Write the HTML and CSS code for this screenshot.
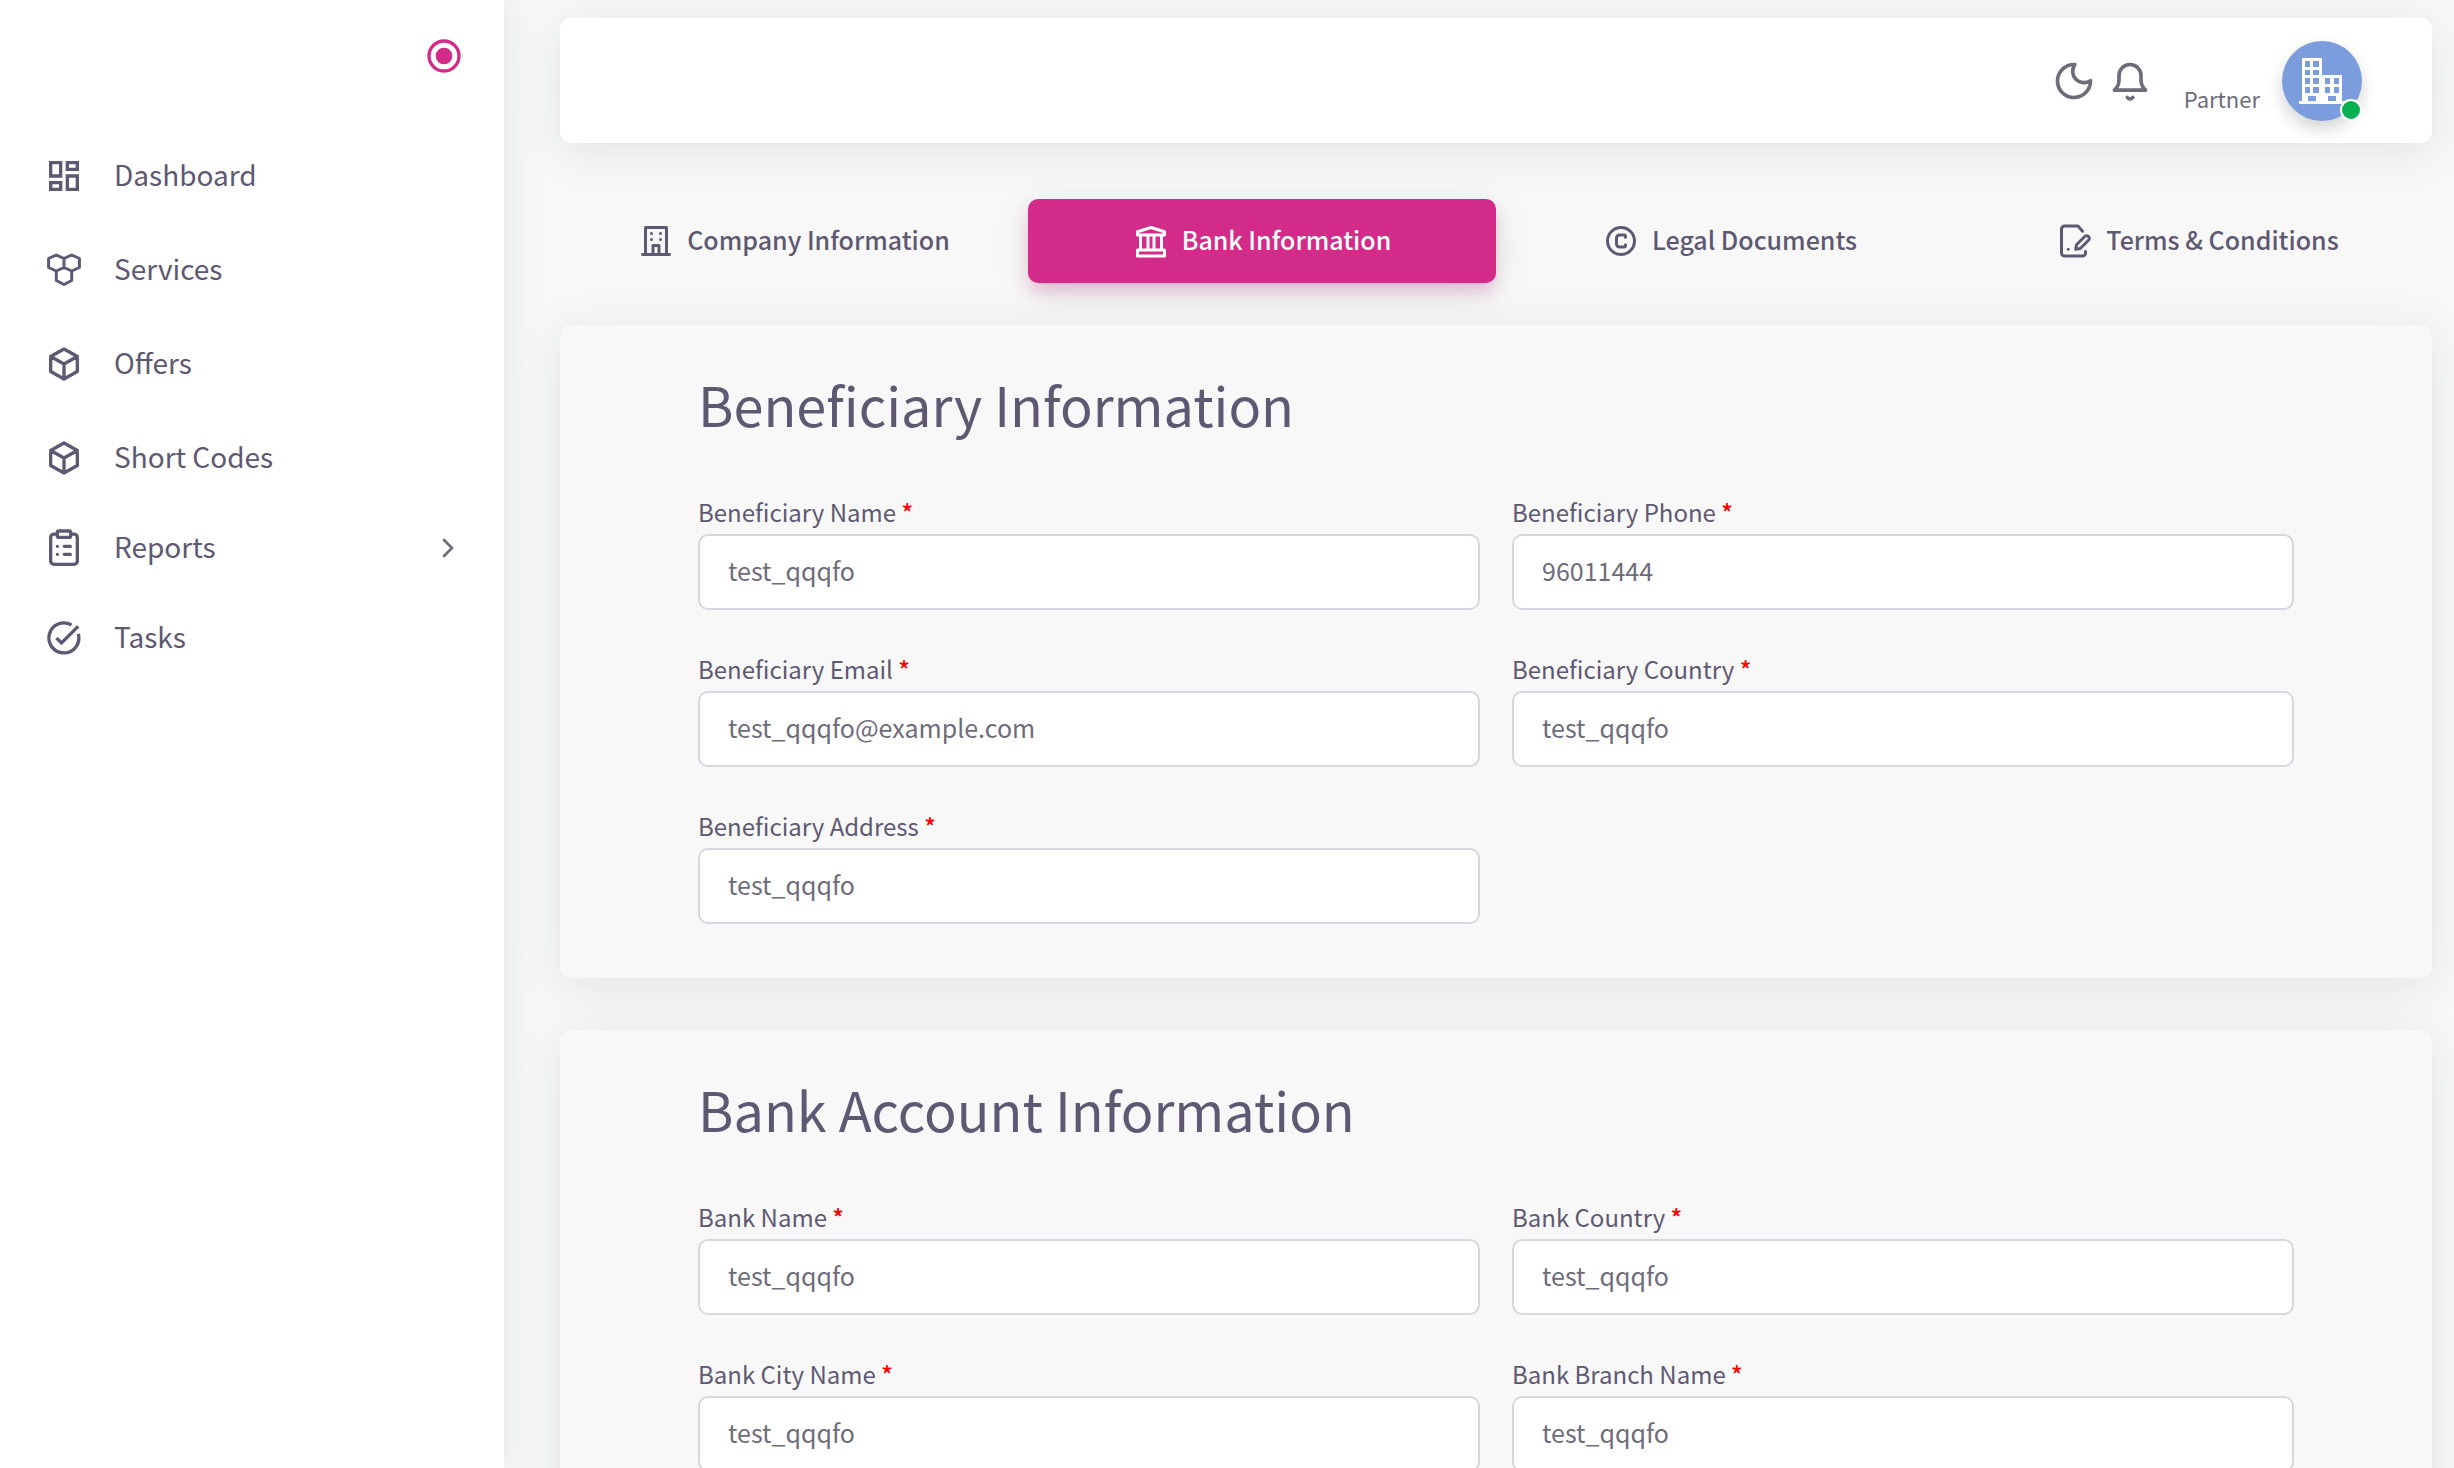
FILE: index.html
```html
<!DOCTYPE html>
<html lang="en">
<head>
  <meta charset="UTF-8">
  <meta name="viewport" content="width=device-width, initial-scale=1.0">
  <title>Bank Information</title>
  <link rel="stylesheet" href="styles.css">
</head>
<body>
  <div class="layout">
    <aside class="sidebar">
      <div class="sidebar-header">
        <button class="icon-button pin" type="button" aria-label="Pin menu">
          <svg viewBox="0 0 24 24" class="icon-lg"><circle cx="12" cy="12" r="9"/><circle cx="12" cy="12" r="5" class="fill"/></svg>
        </button>
      </div>

      <nav class="menu">
        <div class="menu-group menu-main">
          <a class="menu-link" href="#">
            <svg viewBox="0 0 24 24" class="icon-lg square"><path d="M4 4h6v8H4zM14 4h6v4h-6zM4 16h6v4H4zM14 12h6v8h-6z"/></svg>
            <span>Dashboard</span>
          </a>
          <a class="menu-link" href="#">
            <svg viewBox="0 0 40 40" class="icon-lg heavy"><path d="M12.300 5L20 8.500v9L12.300 21l-7.700-3.500v-9zM27.700 5l7.700 3.500v9L27.700 21 20 17.500v-9zM12.300 21v9.500l7.700 4 7.700-4V21"/></svg>
            <span>Services</span>
          </a>
          <a class="menu-link" href="#">
            <svg viewBox="0 0 24 24" class="icon-lg"><path d="M12 3l8 4.500v9L12 21l-8-4.500v-9zM12 12l8-4.500M12 12v9M12 12L4 7.500"/></svg>
            <span>Offers</span>
          </a>
          <a class="menu-link" href="#">
            <svg viewBox="0 0 24 24" class="icon-lg"><path d="M12 3l8 4.500v9L12 21l-8-4.500v-9zM12 12l8-4.500M12 12v9M12 12L4 7.500"/></svg>
            <span>Short Codes</span>
          </a>
        </div>
        <div class="menu-group">
          <a class="menu-link" href="#">
            <svg viewBox="0 0 24 24" class="icon-lg"><path d="M8 3.700H6a2 2 0 0 0-2 2v14.100a2 2 0 0 0 2 2h12a2 2 0 0 0 2-2V5.700a2 2 0 0 0-2-2h-2M9 1.800h6a1 1 0 0 1 1 1v1.800a1 1 0 0 1-1 1H9a1 1 0 0 1-1-1V2.800a1 1 0 0 1 1-1M8 11h.01M12.200 11h3.600M8 15.800h.01M12.200 15.800h3.600"/></svg>
            <span>Reports</span>
            <svg viewBox="0 0 24 24" class="icon-sm chevron"><path d="M9 6l6 6-6 6"/></svg>
          </a>
          <a class="menu-link" href="#">
            <svg viewBox="0 0 24 24" class="icon-lg square"><path d="M7.500 12l3 3L20.500 5M16.500 4.200A9 9 0 1 0 20.600 9.500"/></svg>
            <span>Tasks</span>
          </a>
        </div>
      </nav>
    </aside>

    <div class="content">
      <header class="navbar">
        <button class="icon-button" type="button" aria-label="Dark mode">
          <svg viewBox="0 0 24 24" class="icon-xl"><path d="M12.500 3A6.200 6.200 0 0 0 21 11.800A9 9 0 1 1 12.500 3z"/></svg>
        </button>
        <button class="icon-button" type="button" aria-label="Notifications">
          <svg viewBox="0 0 24 24" class="icon-xl"><path d="M3.500 17c1.800-1.500 2.500-3 2.500-5.500V9a6 6 0 0 1 12 0v2.500c0 2.500.7 4 2.500 5.500zM10.500 21q1.500 1.500 3 0"/></svg>
        </button>
        <span class="user-role">Partner</span>
        <div class="avatar">
          <svg viewBox="0 0 80 80" class="avatar-picture">
            <path class="building" d="M20 17h20v17h20v26h3v3H17v-3h3z"/>
            <path class="window" d="M23 20h5v6h-5zM31 20h6v6h-6zM23 29h5v5h-5zM31 29h6v5h-6zM23 37h5v6h-5zM31 37h6v6h-6zM23 46h5v6h-5zM31 46h6v6h-6zM43 37h5v6h-5zM52 37h5v6h-5zM43 46h5v6h-5zM52 46h5v6h-5zM26 55h8v5h-8zM46 55h8v5h-8z"/>
          </svg>
          <span class="status"></span>
        </div>
      </header>

      <div class="tabs" role="tablist">
        <button class="tab" type="button" role="tab">
          <svg viewBox="0 0 24 24" class="icon-tab"><path d="M3 21h18M5 21V3h14v18M9 7h.01M9 11h.01M15 7h.01M15 11h.01M10 21v-6h4v6"/></svg>
          <span>Company Information</span>
        </button>
        <button class="tab active" type="button" role="tab" aria-selected="true">
          <svg viewBox="0 0 24 24" class="icon-tab"><path d="M3 8V5.800L12 3l9 2.800V8zM5 8v10M10 8v10M14 8v10M19 8v10M3 18h18v4H3z"/></svg>
          <span>Bank Information</span>
        </button>
        <button class="tab" type="button" role="tab">
          <svg viewBox="0 0 24 24" class="icon-tab"><circle cx="12" cy="12" r="9"/><path d="M15 9.500V9a1 1 0 0 0-1-1h-3a2 2 0 0 0-2 2v4a2 2 0 0 0 2 2h3a1 1 0 0 0 1-1v-.500"/></svg>
          <span>Legal Documents</span>
        </button>
        <button class="tab" type="button" role="tab">
          <svg viewBox="0 0 24 24" class="icon-tab"><path d="M17 5.500L14 2H5a2 2 0 0 0-2 2v16a2 2 0 0 0 2 2h12a2 2 0 0 0 2-2v-1M7.500 17.500h.01M12.500 17.500l.5-3 5.500-5.500a1.700 1.700 0 0 1 2.500 2.500L15.500 17z"/></svg>
          <span>Terms &amp; Conditions</span>
        </button>
      </div>

      <form class="forms">
        <section class="card">
          <h2 class="card-title">Beneficiary Information</h2>
          <div class="fields">
            <div class="field">
              <label for="beneficiaryName">Beneficiary Name <span class="required">*</span></label>
              <input type="text" id="beneficiaryName" value="test_qqqfo">
            </div>
            <div class="field">
              <label for="beneficiaryPhone">Beneficiary Phone <span class="required">*</span></label>
              <input type="text" id="beneficiaryPhone" value="96011444">
            </div>
            <div class="field">
              <label for="beneficiaryEmail">Beneficiary Email <span class="required">*</span></label>
              <input type="text" id="beneficiaryEmail" value="test_qqqfo@example.com">
            </div>
            <div class="field">
              <label for="beneficiaryCountry">Beneficiary Country <span class="required">*</span></label>
              <input type="text" id="beneficiaryCountry" value="test_qqqfo">
            </div>
            <div class="field">
              <label for="beneficiaryAddress">Beneficiary Address <span class="required">*</span></label>
              <input type="text" id="beneficiaryAddress" value="test_qqqfo">
            </div>
          </div>
        </section>

        <section class="card">
          <h2 class="card-title">Bank Account Information</h2>
          <div class="fields">
            <div class="field">
              <label for="bankName">Bank Name <span class="required">*</span></label>
              <input type="text" id="bankName" value="test_qqqfo">
            </div>
            <div class="field">
              <label for="bankCountry">Bank Country <span class="required">*</span></label>
              <input type="text" id="bankCountry" value="test_qqqfo">
            </div>
            <div class="field">
              <label for="bankCity">Bank City Name <span class="required">*</span></label>
              <input type="text" id="bankCity" value="test_qqqfo">
            </div>
            <div class="field">
              <label for="bankBranch">Bank Branch Name <span class="required">*</span></label>
              <input type="text" id="bankBranch" value="test_qqqfo">
            </div>
          </div>
        </section>
      </form>
    </div>
  </div>
</body>
</html>
```

FILE: styles.css
```css
* {
  margin: 0;
  padding: 0;
  box-sizing: border-box;
}

body {
  font-family: "Noto Sans CJK SC", "Open Sans", sans-serif;
  font-size: 24px;
  color: #5e5873;
  background-color: #f8f8f8;
}

button,
input {
  font: inherit;
  color: inherit;
}

svg {
  display: block;
  flex-shrink: 0;
  fill: none;
  stroke: currentColor;
  stroke-width: 2;
  stroke-linecap: round;
  stroke-linejoin: round;
}

svg .fill {
  fill: currentColor;
  stroke: none;
}

.square {
  stroke-linecap: butt;
  stroke-linejoin: miter;
}

.heavy {
  stroke-width: 3;
}

.icon-sm {
  width: 32px;
  height: 32px;
}

.icon-tab {
  width: 36px;
  height: 36px;
}

.icon-lg {
  width: 40px;
  height: 40px;
}

.icon-xl {
  width: 44px;
  height: 44px;
}

.icon-button {
  border: none;
  background: none;
  cursor: pointer;
}

.layout {
  display: flex;
  height: 100vh;
  overflow: hidden;
}

/* sidebar */
.sidebar {
  width: 504px;
  flex-shrink: 0;
  background-color: #fff;
  box-shadow: 0 0 40px rgba(34, 41, 47, 0.1);
}

.sidebar-header {
  display: flex;
  justify-content: flex-end;
  padding: 36px 40px 0 0;
}

.pin {
  color: #d22b8a;
}

.menu {
  padding: 58px 40px 0 44px;
}

.menu-group {
  display: flex;
  flex-direction: column;
  gap: 6px;
}

.menu-main {
  gap: 10px;
  margin-bottom: 6px;
}

.menu-link {
  display: flex;
  align-items: center;
  height: 84px;
  gap: 30px;
  font-size: 28px;
  line-height: 40px;
  color: #5e5873;
  text-decoration: none;
}

.menu-link span {
  padding-bottom: 5px;
}

.chevron {
  margin-left: auto;
  color: #6e6b7b;
}

/* top bar */
.content {
  flex: 1;
  min-width: 0;
  padding: 18px 22px 0 56px;
}

.navbar {
  display: flex;
  align-items: center;
  justify-content: flex-end;
  gap: 12px;
  height: 125px;
  padding-right: 70px;
  border-radius: 11px;
  background-color: #fff;
  color: #6e6b7b;
  box-shadow: 0 8px 48px rgba(34, 41, 47, 0.1);
}

.user-role {
  margin-left: 20px;
  padding-top: 34px;
  font-size: 22px;
  line-height: 32px;
}

.avatar {
  position: relative;
  margin-left: 10px;
  border-radius: 50%;
  background-color: #7b9ddd;
  box-shadow: 0 8px 16px rgba(34, 41, 47, 0.2);
}

.avatar-picture {
  width: 80px;
  height: 80px;
  stroke: none;
}

.building {
  fill: #fff;
}

.window {
  fill: #7b9ddd;
}

.status {
  position: absolute;
  right: 0;
  bottom: 0;
  width: 22px;
  height: 22px;
  border: 2px solid #fff;
  border-radius: 50%;
  background-color: #06b050;
}

/* tabs */
.tabs {
  display: grid;
  grid-template-columns: repeat(4, 1fr);
  margin: 56px 0 42px;
}

.tab {
  display: flex;
  align-items: center;
  justify-content: center;
  gap: 13px;
  height: 84px;
  border: none;
  border-radius: 10px;
  background: none;
  font-size: 25px;
  font-weight: 500;
  cursor: pointer;
}

.tab span {
  padding-bottom: 4px;
}

.tab.active {
  color: #fff;
  background-color: #d22b8a;
  box-shadow: 0 8px 36px rgba(34, 41, 47, 0.1), 0 10px 16px -2px rgba(210, 43, 138, 0.25);
}

/* cards */
.card {
  padding: 39px 138px 54px;
  margin-bottom: 52px;
  border-radius: 11px;
  background-color: #f8f8f8;
  box-shadow: 0 8px 48px rgba(34, 41, 47, 0.1);
}

.card-title {
  font-size: 54px;
  font-weight: 400;
  line-height: 80px;
  margin-bottom: 51px;
}

.fields {
  display: grid;
  grid-template-columns: 1fr 1fr;
  gap: 42px 32px;
}

.field label {
  display: block;
  height: 39px;
  font-size: 24px;
  line-height: 34px;
}

.required {
  color: #f00;
  font-weight: 500;
}

.field input {
  display: block;
  width: 100%;
  height: 76px;
  padding: 0 28px 4px;
  border: 2px solid #d8d6de;
  border-radius: 10px;
  background-color: #fff;
  color: #6e6b7b;
  font-size: 25px;
}
```
